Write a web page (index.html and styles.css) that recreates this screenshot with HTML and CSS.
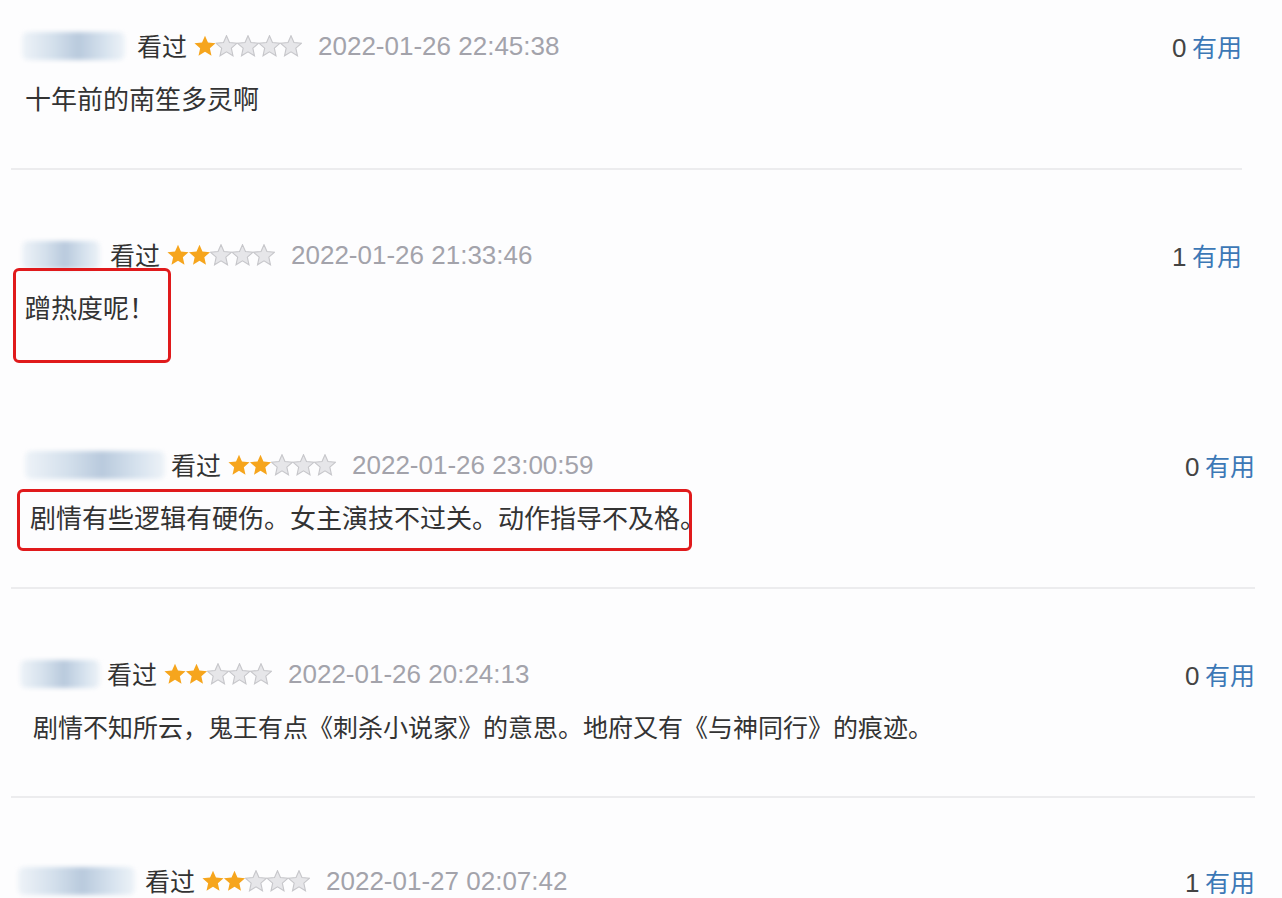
FILE: index.html
```html
<!DOCTYPE html>
<html lang="zh-CN">
<head>
  <meta charset="UTF-8">
  <title>短评</title>
  <link rel="stylesheet" href="styles.css">
</head>
<body>

  <svg class="defs" width="0" height="0">
    <symbol id="star" viewBox="0 0 20 20">
      <polygon points="10,0.6 12.7,6.8 19.6,7.4 14.4,12 15.9,18.9 10,15.3 4.1,18.9 5.6,12 0.4,7.4 7.3,6.8"/>
    </symbol>
  </svg>

  <div class="list">

    <div class="review first narrow">
      <div class="head h1">
        <span class="name n1"></span>
        <span class="seen">看过</span>
        <svg class="stars" width="108" height="22" viewBox="0 0 108 22">
          <use href="#star" class="on" x="0" y="0" width="22" height="22"/>
          <use href="#star" class="off" x="21.5" y="0" width="22" height="22"/>
          <use href="#star" class="off" x="43" y="0" width="22" height="22"/>
          <use href="#star" class="off" x="64.5" y="0" width="22" height="22"/>
          <use href="#star" class="off" x="86" y="0" width="22" height="22"/>
        </svg>
        <span class="date">2022-01-26 22:45:38</span>
        <span class="useful"><span class="count">0</span> 有用</span>
      </div>
      <div class="text t1">十年前的南笙多灵啊</div>
    </div>

    <div class="review plain narrow">
      <div class="head h2">
        <span class="name n2"></span>
        <span class="seen">看过</span>
        <svg class="stars" width="108" height="22" viewBox="0 0 108 22">
          <use href="#star" class="on" x="0" y="0" width="22" height="22"/>
          <use href="#star" class="on" x="21.5" y="0" width="22" height="22"/>
          <use href="#star" class="off" x="43" y="0" width="22" height="22"/>
          <use href="#star" class="off" x="64.5" y="0" width="22" height="22"/>
          <use href="#star" class="off" x="86" y="0" width="22" height="22"/>
        </svg>
        <span class="date">2022-01-26 21:33:46</span>
        <span class="useful"><span class="count">1</span> 有用</span>
      </div>
      <div class="text t2 mark-a">蹭热度呢！</div>
    </div>

    <div class="review">
      <div class="head h3">
        <span class="name n3"></span>
        <span class="seen">看过</span>
        <svg class="stars" width="108" height="22" viewBox="0 0 108 22">
          <use href="#star" class="on" x="0" y="0" width="22" height="22"/>
          <use href="#star" class="on" x="21.5" y="0" width="22" height="22"/>
          <use href="#star" class="off" x="43" y="0" width="22" height="22"/>
          <use href="#star" class="off" x="64.5" y="0" width="22" height="22"/>
          <use href="#star" class="off" x="86" y="0" width="22" height="22"/>
        </svg>
        <span class="date">2022-01-26 23:00:59</span>
        <span class="useful"><span class="count">0</span> 有用</span>
      </div>
      <div class="text t3 mark-b">剧情有些逻辑有硬伤。女主演技不过关。动作指导不及格。</div>
    </div>

    <div class="review">
      <div class="head h4">
        <span class="name n4"></span>
        <span class="seen">看过</span>
        <svg class="stars" width="108" height="22" viewBox="0 0 108 22">
          <use href="#star" class="on" x="0" y="0" width="22" height="22"/>
          <use href="#star" class="on" x="21.5" y="0" width="22" height="22"/>
          <use href="#star" class="off" x="43" y="0" width="22" height="22"/>
          <use href="#star" class="off" x="64.5" y="0" width="22" height="22"/>
          <use href="#star" class="off" x="86" y="0" width="22" height="22"/>
        </svg>
        <span class="date">2022-01-26 20:24:13</span>
        <span class="useful"><span class="count">0</span> 有用</span>
      </div>
      <div class="text t4">剧情不知所云，鬼王有点《刺杀小说家》的意思。地府又有《与神同行》的痕迹。</div>
    </div>

    <div class="review last">
      <div class="head h5">
        <span class="name n5"></span>
        <span class="seen">看过</span>
        <svg class="stars" width="108" height="22" viewBox="0 0 108 22">
          <use href="#star" class="on" x="0" y="0" width="22" height="22"/>
          <use href="#star" class="on" x="21.5" y="0" width="22" height="22"/>
          <use href="#star" class="off" x="43" y="0" width="22" height="22"/>
          <use href="#star" class="off" x="64.5" y="0" width="22" height="22"/>
          <use href="#star" class="off" x="86" y="0" width="22" height="22"/>
        </svg>
        <span class="date">2022-01-27 02:07:42</span>
        <span class="useful"><span class="count">1</span> 有用</span>
      </div>
    </div>

  </div>

</body>
</html>
```

FILE: styles.css
```css
body {
  margin: 0;
  background-color: #fdfdfe;
  font-family: "Noto Sans CJK SC", "Liberation Sans", sans-serif;
  color: #333;
  overflow: hidden;
}

.defs {
  position: absolute;
  width: 0;
  height: 0;
}

.list {
  width: 1282px;
}

.review {
  margin: 0 27px 0 11px;
  padding: 65px 0 50px;
  border-bottom: 2px solid #ececee;
}

.review.first {
  padding-top: 26px;
}

.review.narrow {
  margin-right: 40px;
}

.review.plain {
  border-bottom: none;
  padding-bottom: 53px;
}

.review.last {
  border-bottom: none;
  padding-top: 63px;
  padding-bottom: 0;
}

.head {
  display: flex;
  align-items: center;
  height: 40px;
  font-size: 25px;
}

.h1 { padding-left: 11px; }
.h2 { padding-left: 11px; }
.h3 { padding-left: 14px; }
.h4 { padding-left: 9px; }
.h5 { padding-left: 7px; }

/* blurred user names */
.name {
  display: block;
  height: 28px;
  border-radius: 6px;
  background: linear-gradient(90deg, #eef3f8 0%, #d4e0ec 30%, #b9cadd 55%, #d6e2ee 80%, #eef3f8 100%);
  filter: blur(2px);
}

.n1 { width: 103px; margin-right: 12px; }
.n2 { width: 78px; margin-right: 10px; }
.n3 { width: 140px; margin-right: 6px; }
.n4 { width: 80px; margin-right: 7px; }
.n5 { width: 117px; margin-right: 10px; }

.seen {
  color: #333;
  line-height: 1;
  position: relative;
  top: -1px;
}

.stars {
  margin-left: 7px;
  display: block;
  overflow: visible;
}

.stars .on {
  fill: #f6a51d;
}

.stars .off {
  fill: #e6e6e9;
  stroke: #c6c6ca;
  stroke-width: 1;
}

.date {
  margin-left: 16px;
  font-family: "Liberation Sans", sans-serif;
  font-size: 26px;
  color: #a3a3ab;
}

.useful {
  margin-left: auto;
  color: #3c78b6;
}

.count {
  font-family: "Liberation Sans", sans-serif;
  font-size: 26px;
  color: #444;
}

.text {
  margin-top: 12px;
  height: 40px;
  line-height: 40px;
  font-size: 26px;
  color: #333;
  position: relative;
  white-space: nowrap;
}

.t1 { padding-left: 14px; }
.t2 { padding-left: 14px; }
.t3 { padding-left: 19px; }
.t4 { padding-left: 22px; font-size: 25px; }

/* red highlight boxes */
.mark-a::after,
.mark-b::after {
  content: '';
  position: absolute;
  border: 3px solid #e01a1c;
  border-radius: 6px;
  box-sizing: border-box;
}

.mark-a::after {
  left: 2px;
  top: -19px;
  width: 158px;
  height: 95px;
}

.mark-b::after {
  left: 6px;
  top: -8px;
  width: 675px;
  height: 62px;
}
```
